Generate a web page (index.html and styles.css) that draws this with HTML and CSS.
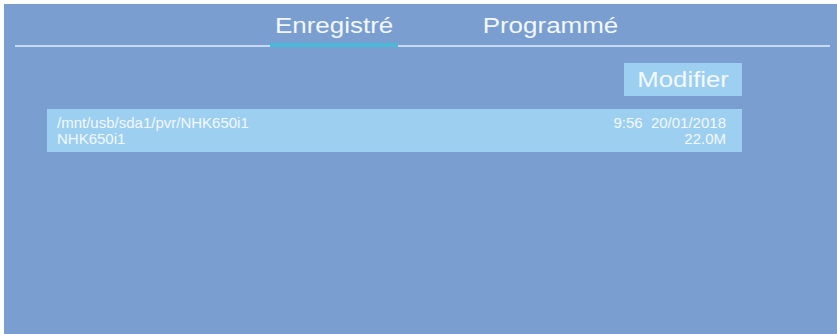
FILE: index.html
```html
<!DOCTYPE html>
<html>
<head>
<meta charset="utf-8">
<link rel="stylesheet" href="styles.css">
</head>
<body>
<div class="screen">
  <div class="tabs">
    <div class="tab active"><span class="wide">Enregistré</span></div>
    <div class="tab"><span class="wide">Programmé</span></div>
  </div>
  <div class="content">
    <div class="toolbar"><div class="btn"><span class="wide">Modifier</span></div></div>
    <div class="row">
      <div class="left">
        <div>/mnt/usb/sda1/pvr/NHK650i1</div>
        <div>NHK650i1</div>
      </div>
      <div class="right">
        <div>9:56&nbsp;&nbsp;20/01/2018</div>
        <div>22.0M</div>
      </div>
    </div>
  </div>
</div>
</body>
</html>
```
FILE: styles.css
```css
html, body { margin: 0; padding: 0; background: #ffffff; }
body { padding: 4px 0 0 4px; width: 837px; height: 334px; box-sizing: border-box; overflow: hidden; }
.screen {
  background: #7a9ed0;
  height: 330px;
  font-family: "Liberation Sans", Arial, sans-serif;
  color: #f2f8fd;
}
.wide { display: inline-block; transform: scaleX(1.18); transform-origin: center; }
.tabs {
  margin: 0 7px 0 11px;
  height: 41px;
  border-bottom: 2px solid #c6d9f0;
  display: flex;
  gap: 88px;
  padding-left: 255px;
}
.tab {
  width: 128px;
  font-size: 22px;
  line-height: 26px;
  padding-top: 9px;
  text-align: center;
  box-sizing: border-box;
}
.tab.active {
  border-bottom: 4px solid #4bb9d6;
  margin-bottom: -2px;
}
.content { padding: 16px 0 0 43px; width: 695px; }
.toolbar { display: flex; justify-content: flex-end; }
.btn {
  width: 118px;
  height: 33px;
  background: #9dcff0;
  font-size: 22px;
  line-height: 33px;
  text-align: center;
  color: #f3f9fe;
}
.btn .wide { transform: scaleX(1.17); }
.row {
  margin-top: 13px;
  background: #9dcff0;
  height: 43px;
  box-sizing: border-box;
  padding: 6px 16px 0 10px;
  display: flex;
  justify-content: space-between;
  font-size: 15px;
  line-height: 16px;
  color: #f3f9fe;
}
.right { text-align: right; }
```
